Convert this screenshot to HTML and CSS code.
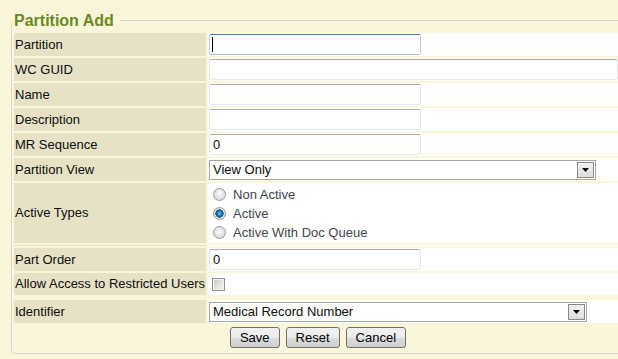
FILE: index.html
```html
<!DOCTYPE html>
<html lang="en">

<head>
    <meta charset="UTF-8">
    <title>Partition Add</title>
    <link rel="stylesheet" href="styles.css">
</head>

<body>
    <svg display="none">
        <symbol id="caret" viewBox="0 0 7 4">
            <polygon points="0 0,7 0,3.5 4" fill="currentcolor" />
        </symbol>
    </svg>
    <form class="form">
        <fieldset class="panel">
            <legend class="panel__title">Partition Add</legend>
            <table class="grid">
                <tr>
                    <td class="grid__label">Partition</td>
                    <td class="grid__value"><input class="field field--focus" type="text"></td>
                </tr>
                <tr>
                    <td class="grid__label">WC GUID</td>
                    <td class="grid__value"><input class="field field--wide" type="text"></td>
                </tr>
                <tr>
                    <td class="grid__label">Name</td>
                    <td class="grid__value"><input class="field" type="text"></td>
                </tr>
                <tr>
                    <td class="grid__label">Description</td>
                    <td class="grid__value"><input class="field" type="text"></td>
                </tr>
                <tr>
                    <td class="grid__label">MR Sequence</td>
                    <td class="grid__value"><input class="field" type="text" value="0"></td>
                </tr>
                <tr>
                    <td class="grid__label">Partition View</td>
                    <td class="grid__value">
                        <span class="combo combo--view">
                            <span class="combo__text">View Only</span>
                            <span class="combo__btn"><svg width="7" height="4"><use href="#caret" /></svg></span>
                        </span>
                    </td>
                </tr>
                <tr>
                    <td class="grid__label">Active Types</td>
                    <td class="grid__value grid__value--list">
                        <label class="choice"><span class="radio"></span>Non Active</label>
                        <label class="choice"><span class="radio radio--on"></span>Active</label>
                        <label class="choice"><span class="radio"></span>Active With Doc Queue</label>
                    </td>
                </tr>
                <tr class="grid__spacer">
                    <td class="grid__label"></td>
                    <td class="grid__value"></td>
                </tr>
                <tr>
                    <td class="grid__label">Part Order</td>
                    <td class="grid__value"><input class="field" type="text" value="0"></td>
                </tr>
                <tr class="grid__row--short">
                    <td class="grid__label">Allow Access to Restricted Users</td>
                    <td class="grid__value"><span class="check"></span></td>
                </tr>
                <tr class="grid__spacer">
                    <td></td>
                    <td></td>
                </tr>
                <tr>
                    <td class="grid__label">Identifier</td>
                    <td class="grid__value">
                        <span class="combo combo--ident">
                            <span class="combo__text">Medical Record Number</span>
                            <span class="combo__btn"><svg width="7" height="4"><use href="#caret" /></svg></span>
                        </span>
                    </td>
                </tr>
                <tr>
                    <td class="grid__actions" colspan="2">
                        <div class="btn-group">
                            <button class="btn" type="button">Save</button>
                            <button class="btn" type="button">Reset</button>
                            <button class="btn" type="button">Cancel</button>
                        </div>
                    </td>
                </tr>
            </table>
        </fieldset>
    </form>
</body>

</html>
```

FILE: styles.css
```css
* {
    box-sizing: border-box;
    margin: 0;
    padding: 0;
}

:root {
    --bg: #fbf6da;
    --label: #e7e2c6;
    --ink: #0c0c0c;
    --green: #67891f;
    --line: #d6d6d0;
}

html,
body {
    overflow: hidden;
}

body {
    background-color: var(--bg);
    color: var(--ink);
    font: 13px/1.2 "Liberation Sans", Arial, sans-serif;
    width: 640px;
}

.panel {
    border: 1px solid var(--line);
    border-radius: 4px;
    margin: 10px 0 0 11px;
    padding: 1px 0 0;
    width: 614px;
}

.panel__title {
    color: var(--green);
    font-size: 16px;
    font-weight: bold;
    line-height: 18px;
    padding: 2px 6px 0 2px;
}

.grid {
    border-spacing: 2px;
    width: 612px;
}

.grid td {
    height: 23px;
    vertical-align: middle;
}

.grid .grid__row--short td {
    height: 22px;
}

.grid__label {
    background-color: var(--label);
    padding: 0 1px;
    white-space: nowrap;
}

.grid__value {
    background-color: #fff;
    padding: 0 1px;
    width: 100%;
}

.grid__value--list {
    padding: 2px 0 1px 5px;
}

.grid .grid__spacer td {
    height: 1px;
    line-height: 0;
    font-size: 0;
}

.field {
    border: 1px solid #e2e3ea;
    border-top-color: #abadb3;
    border-bottom-color: #e3e9ef;
    border-radius: 2px;
    color: var(--ink);
    display: block;
    font: inherit;
    height: 21px;
    outline: none;
    padding: 0 3px;
    width: 212px;
}

.field--wide {
    width: 409px;
}

/* focused look with a drawn text caret */
.field--focus {
    background: linear-gradient(#000, #000) no-repeat 2px 2px / 1px 15px #fff;
    border-color: #b5cfe7;
    border-top-color: #3d7bad;
    border-bottom-color: #a4c9e3;
}

.combo {
    align-items: center;
    background-color: #fff;
    border: 1px solid #a5a5a5;
    display: flex;
    height: 20px;
    padding: 0 1px 0 3px;
}

.combo--view {
    width: 387px;
}

.combo--ident {
    width: 378px;
}

.combo__text {
    flex: 1;
}

.combo__btn {
    align-items: center;
    background: linear-gradient(#f2f2f2, #dedede);
    border: 1px solid #8a8a8a;
    color: #000;
    display: flex;
    justify-content: center;
    width: 17px;
    height: 16px;
}

.combo__btn svg {
    display: block;
}

.choice {
    align-items: center;
    color: #43434f;
    display: flex;
    height: 19px;
}

.radio {
    background: radial-gradient(circle at 50% 40%, #fdfdfd 0, #e6e6e6 45%, #cfcfcf 100%);
    border: 1px solid #9a9a9a;
    border-radius: 50%;
    flex-shrink: 0;
    margin-right: 7px;
    width: 13px;
    height: 13px;
}

.radio--on {
    background: radial-gradient(circle, #6fc1ee 0, #1f7ec0 30%, #16466a 50%, #e2e2e2 56%, #d2d2d2 100%);
}

.check {
    background: linear-gradient(135deg, #cbcbcb, #f6f6f6);
    border: 1px solid #8e8f8f;
    box-shadow: inset 0 0 0 1px #f4f4f4;
    display: block;
    margin-left: 3px;
    width: 13px;
    height: 13px;
}

.grid .grid__actions {
    height: 26px;
    padding: 2px 0 3px;
}

.btn-group {
    display: flex;
    gap: 6px;
    justify-content: center;
}

.btn {
    background: linear-gradient(#f2f2f2 0%, #ebebeb 50%, #dddddd 51%, #cfcfcf 100%);
    border: 1px solid #707070;
    border-radius: 3px;
    color: #000;
    cursor: pointer;
    font: inherit;
    height: 21px;
    padding: 0 9px;
}

.btn:hover {
    background: linear-gradient(#eaf6fd 0%, #d9f0fc 50%, #bee6fd 51%, #a7d9f5 100%);
    border-color: #3c7fb1;
}
```
